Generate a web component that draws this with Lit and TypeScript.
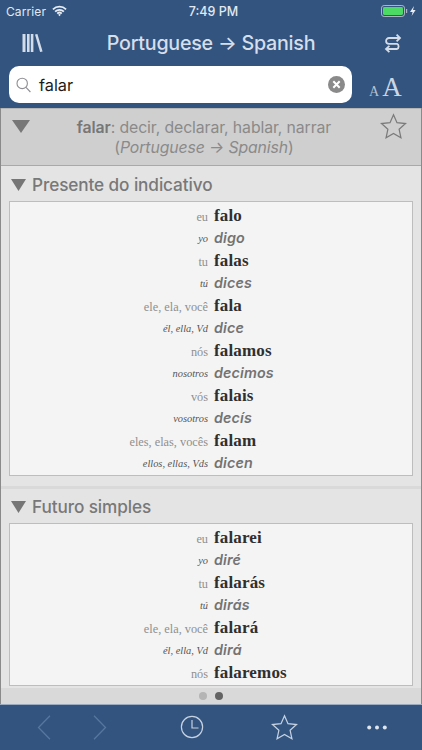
import { LitElement, html, css, svg } from "lit";
import { customElement } from "lit/decorators.js";

type Row = [string, string];
const present: Row[] = [
  ["eu", "falo"], ["yo", "digo"], ["tu", "falas"], ["tú", "dices"],
  ["ele, ela, você", "fala"], ["él, ella, Vd", "dice"], ["nós", "falamos"], ["nosotros", "decimos"],
  ["vós", "falais"], ["vosotros", "decís"], ["eles, elas, vocês", "falam"], ["ellos, ellas, Vds", "dicen"],
];
const futuro: Row[] = [
  ["eu", "falarei"], ["yo", "diré"], ["tu", "falarás"], ["tú", "dirás"],
  ["ele, ela, você", "falará"], ["él, ella, Vd", "dirá"], ["nós", "falaremos"],
];
const starPts = "12,1.6 15.1,8.6 22.7,9.4 17,14.5 18.6,22 12,18.1 5.4,22 7,14.5 1.3,9.4 8.9,8.6";
const star = svg`<polygon points=${starPts} fill="none" stroke="currentColor" stroke-width="1.1"></polygon>`;

@customElement("app-root")
export class AppRoot extends LitElement {
  static styles = css`
    :host { display: block; width: 422px; height: 750px; overflow: hidden; background: #32547f; font-family: Inter, "Liberation Sans", sans-serif; }
    .app { height: 750px; display: flex; flex-direction: column; }
    .status { height: 22px; display: flex; align-items: center; padding: 0 6px; color: #e2e8f0; font-size: 12px; flex: none; position: relative; }
    .carrier { margin-right: 6px; letter-spacing: 0.1px; }
    .time { position: absolute; left: 0; right: 0; padding-left: 5px; text-align: center; font-weight: 500; font-size: 12.5px; }
    .batt { margin-left: auto; display: flex; align-items: center; }
    .nav { height: 42px; box-sizing: border-box; flex: none; display: flex; align-items: center; padding: 0 20px 0 22px; color: #d3dce8; }
    .title { flex: 1; text-align: center; font-size: 19.7px; font-weight: 500; letter-spacing: -0.25px; color: #d5deea; padding-right: 5px; }
    .searchrow { height: 44px; flex: none; display: flex; align-items: flex-start; padding: 2px 0 0 9px; box-sizing: border-box; }
    .search { width: 343px; height: 37px; box-sizing: border-box; background: #fff; border-radius: 10px; display: flex; align-items: center; padding: 0 7px; }
    .query { flex: 1; margin-left: 8px; font-size: 16.3px; color: #1b1b1b; }
    .aa { margin: 3px 0 0 17px; color: #ccd6e3; font-family: "Liberation Serif", serif; display: flex; align-items: baseline; line-height: 37px; height: 37px; }
    .aa .s { font-size: 14px; margin-right: 3px; color: #b4c1d2; }
    .aa .b { font-size: 27px; }
    .panel { flex: 1; min-height: 0; display: flex; flex-direction: column; background: #e4e4e4; border-left: 1px solid #8a8a8a; border-right: 1px solid #8a8a8a; overflow: hidden; }
    .head { height: 58px; flex: none; box-sizing: border-box; background: #cfcfcf; border-top: 1px solid #b5b5b5; border-bottom: 1px solid #a9a9a9; display: flex; align-items: flex-start; color: #808080; }
    .head .tri { flex: none; margin: 11px 0 0 11px; }
    .gloss { flex: 1; text-align: center; font-size: 15.8px; line-height: 20px; padding: 9px 2px 0 0; color: #8a8a8a; letter-spacing: -0.1px; }
    .gloss b { font-weight: 600; color: #777; }
    .headstar { flex: none; margin: 4px 14px 0 0; color: #7a7a7a; }
    .section { border-bottom: 3px solid #d9d9d9; padding-bottom: 10px; flex: none; }
    .section h2 { margin: 0; height: 34px; display: flex; align-items: center; gap: 6px; padding: 1px 0 0 10px; box-sizing: border-box; font-size: 17.2px; font-weight: 500; color: #787878; letter-spacing: -0.1px; }
    .section:first-child h2 { height: 35px; padding-top: 2px; }
    .box { margin: 0 8px; background: #f4f4f4; border: 1px solid #bdbdbd; padding: 2px 0 1px; }
    .row { height: 22.5px; display: grid; grid-template-columns: 198px 1fr; column-gap: 6px; align-items: center; }
    .pron { text-align: right; font-family: "Liberation Serif", serif; font-size: 12.3px; color: #8f8f8f; line-height: 1; padding-top: 3px; }
    .word { font-family: "Liberation Serif", serif; font-weight: 700; font-size: 17px; color: #2f2f2f; line-height: 1; letter-spacing: 0.15px; }
    .alt .pron { font-style: italic; color: #555; font-size: 10.4px; }
    .alt .word { font-family: Inter, "Liberation Sans", sans-serif; font-style: italic; font-weight: 600; font-size: 14.3px; color: #737373; }
    .scroll { flex: 1; min-height: 0; overflow: hidden; }
    .dots { height: 16px; flex: none; background: #d9d9d9; display: flex; justify-content: center; align-items: center; gap: 8px; box-sizing: border-box; }
    .dot { width: 8px; height: 8px; border-radius: 50%; background: #b4b4b4; }
    .dot.on { background: #636363; }
    .tabs { height: 46px; flex: none; box-sizing: border-box; border-top: 1px solid #9aaabf; display: flex; align-items: center; padding: 0 0 1px 37px; background: #32547f; color: #c6d2e2; }
    .fwd { margin-left: 42px; }
    .clock { margin-left: 73px; }
    .fav { margin-left: 67px; }
    .more { margin-left: 69px; }
    svg { display: block; flex: none; }
  `;

  private section(title: string, rows: Row[]) {
    return html`<div class="section">
      <h2><svg width="15" height="12" viewBox="0 0 15 12"><polygon points="0,0 15,0 7.5,12" fill="#767676"></polygon></svg>${title}</h2>
      <div class="box">
        ${rows.map((r, i) => html`<div class="row ${i % 2 ? "alt" : ""}"><span class="pron">${r[0]}</span><span class="word">${r[1]}</span></div>`)}
      </div>
    </div>`;
  }

  render() {
    return html`<div class="app">
      <div class="status">
        <span class="carrier">Carrier</span>
        <svg width="15" height="12" viewBox="0 0 16 12" fill="none" stroke="#e8edf3" stroke-width="1.9"><path d="M1 4.2a10 10 0 0 1 14 0M3.3 6.6a6.8 6.8 0 0 1 9.4 0M5.6 8.8a3.4 3.4 0 0 1 4.8 0"></path><path d="M8 11.6 6.6 10a2 2 0 0 1 2.8 0z" fill="#e8edf3" stroke="none"></path></svg>
        <span class="time">7:49 PM</span>
        <span class="batt"><svg width="35" height="12" viewBox="0 0 35 12">
          <rect x="0.5" y="0.5" width="23" height="11" rx="2.6" fill="none" stroke="#aab6c6"></rect>
          <rect x="2" y="2" width="20" height="8" rx="1.4" fill="#4cd964"></rect>
          <rect x="25" y="4" width="1.2" height="4" fill="#aab6c6"></rect>
          <path d="M33 1 29 7h2.6L30.6 11 34.6 5H32z" fill="#e8edf3"></path>
        </svg></span>
      </div>
      <div class="nav">
        <svg width="21" height="20" viewBox="0 0 21 20" fill="#d3dce8"><rect x="0.5" y="1" width="3" height="18"></rect><rect x="5" y="1" width="2.6" height="18"></rect><rect x="8.8" y="1" width="2.6" height="18"></rect><polygon points="13,1.4 15.4,1 20.6,18.4 18.1,19"></polygon></svg>
        <span class="title">Portuguese → Spanish</span>
        <svg width="18" height="20" viewBox="0 0 18 20" fill="none" stroke="#d3dce8" stroke-width="1.8"><path d="M16 5H5a2.9 2.9 0 0 0 0 5.8h8a2.9 2.9 0 0 1 0 5.2H2"></path><path d="M12.6 1.6 16 5l-3.4 3.4M5.4 12.8 2 16l3.4 3.2"></path></svg>
      </div>
      <div class="searchrow">
        <div class="search">
          <svg width="15" height="16" viewBox="0 0 15 16" fill="none" stroke="#8e8e93" stroke-width="1.1"><circle cx="6.2" cy="6.4" r="5.2"></circle><path d="M10 10.3 14.4 15"></path></svg>
          <span class="query">falar</span>
          <svg width="17" height="17" viewBox="0 0 16 16"><circle cx="8" cy="8" r="8" fill="#8a8a8a"></circle><path d="M5 5l6 6M11 5l-6 6" stroke="#fff" stroke-width="1.9"></path></svg>
        </div>
        <div class="aa"><span class="s">A</span><span class="b">A</span></div>
      </div>
      <div class="panel">
        <div class="head">
          <svg class="tri" width="18" height="13" viewBox="0 0 18 13"><polygon points="0,0 18,0 9,13" fill="#777"></polygon></svg>
          <div class="gloss"><b>falar</b>: decir, declarar, hablar, narrar<br>(<i>Portuguese → Spanish</i>)</div>
          <svg class="headstar" width="27" height="27" viewBox="0 0 24 24">${star}</svg>
        </div>
        <div class="scroll">
          ${this.section("Presente do indicativo", present)}
          ${this.section("Futuro simples", futuro)}
        </div>
        <div class="dots"><span class="dot"></span><span class="dot on"></span></div>
      </div>
      <div class="tabs">
        <svg width="14" height="25" viewBox="0 0 14 25" fill="none" stroke="#58779e" stroke-width="1.3"><path d="M13 .8 1.5 12.5 13 24.2"></path></svg>
        <svg class="fwd" width="14" height="25" viewBox="0 0 14 25" fill="none" stroke="#58779e" stroke-width="1.3"><path d="M1 .8 12.5 12.5 1 24.2"></path></svg>
        <svg class="clock" width="24" height="24" viewBox="0 0 24 24" fill="none" stroke="#c6d2e2" stroke-width="1.2"><circle cx="12" cy="12" r="10.6"></circle><path d="M12 5v8h6.5"></path></svg>
        <svg class="fav" width="27" height="27" viewBox="0 0 24 24">${star}</svg>
        <svg class="more" width="20" height="5" viewBox="0 0 20 5" fill="#dfe6ef"><circle cx="2.2" cy="2.5" r="2"></circle><circle cx="10" cy="2.5" r="2"></circle><circle cx="17.8" cy="2.5" r="2"></circle></svg>
      </div>
    </div>`;
  }
}
